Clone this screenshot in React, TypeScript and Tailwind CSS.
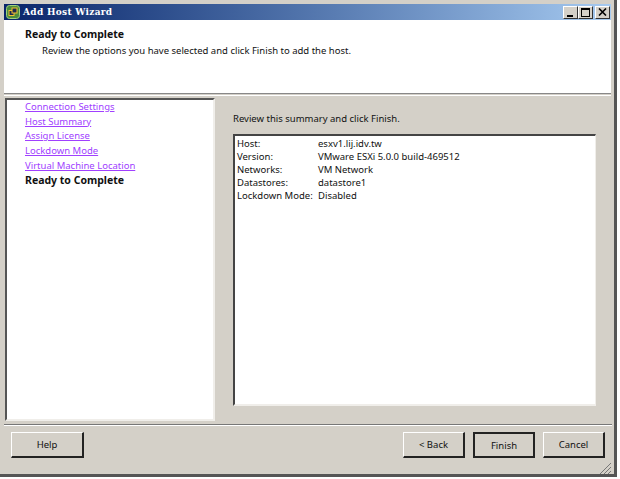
export default function App() {
  const links = ["Connection Settings", "Host Summary", "Assign License", "Lockdown Mode", "Virtual Machine Location"];
  const rows = [
    ["Host:", "esxv1.lij.idv.tw"],
    ["Version:", "VMware ESXi 5.0.0 build-469512"],
    ["Networks:", "VM Network"],
    ["Datastores:", "datastore1"],
    ["Lockdown Mode:", "Disabled"],
  ];
  const btn = "h-[26px] w-[62px] bg-[#d4d0c8] border border-t-white border-l-white border-r-[#222] border-b-[#222] border-r-2 border-b-2 text-[9.5px] text-[#111] flex items-center justify-center";
  return (
    <div className="w-[620px] h-[479px] bg-white overflow-hidden font-['Noto_Sans',sans-serif] text-[9.5px] leading-[15px] text-[#111]">
      <div className="w-[617px] h-[477px] bg-[#d4d0c8] border-r-[3px] border-b-[3px] border-r-[#555] border-b-[#555] pt-[4px] pl-[4px] pr-[3px] flex flex-col">
        <div className="h-[16px] shrink-0 flex items-center bg-gradient-to-r from-[#0a246a] to-[#a6caf0] pl-[2px] pr-[1px]">
          <svg width="14" height="14" viewBox="0 0 14 14" className="shrink-0">
            <rect x="0.5" y="0.5" width="13" height="13" rx="3" fill="#4c8c3c" stroke="#9fd07c" />
            <rect x="3" y="5.5" width="5" height="5" fill="#1d2b4d" stroke="#f0c030" />
            <rect x="6" y="3" width="5" height="5" fill="#1d2b4d" stroke="#f0c030" />
          </svg>
          <span className="ml-[3px] text-white font-bold text-[9px] tracking-[0.3px] font-['DejaVu_Serif',serif]">Add Host Wizard</span>
          <div className="ml-auto flex">
            <div className="w-[15px] h-[13px] bg-[#d4d0c8] border border-t-white border-l-white border-r-[#333] border-b-[#333] flex items-end pl-[3px] pb-[1px]">
              <div className="w-[6px] h-[2px] bg-black" />
            </div>
            <div className="w-[15px] h-[13px] bg-[#d4d0c8] border border-t-white border-l-white border-r-[#333] border-b-[#333] flex items-center justify-center">
              <div className="w-[9px] h-[9px] border border-t-2 border-black" />
            </div>
            <div className="ml-[2px] w-[15px] h-[13px] bg-[#d4d0c8] border border-t-white border-l-white border-r-[#333] border-b-[#333] flex items-center justify-center">
              <svg width="9" height="8" viewBox="0 0 9 8"><path d="M1 0.5L8 7.5M8 0.5L1 7.5" stroke="#000" strokeWidth="1.6" /></svg>
            </div>
          </div>
        </div>
        <div className="h-[73px] shrink-0 bg-white pt-[7px] pl-[21px]">
          <div className="font-bold text-[10.5px]">Ready to Complete</div>
          <div className="pl-[17px] mt-[1px]">Review the options you have selected and click Finish to add the host.</div>
        </div>
        <div className="h-[3px] shrink-0 border-t border-[#888] border-b border-b-white" />
        <div className="flex-1 min-h-0 flex flex-col">
          <div className="flex h-[325px] shrink-0 pt-[2px]">
            <div className="w-[210px] ml-[1px] bg-white border-t-2 border-l-2 border-t-[#555] border-l-[#555] border-r-2 border-b-2 border-r-[#f0eeea] border-b-[#f0eeea] pl-[18px] flex flex-col">
              {links.map((l) => (
                <a key={l} className="h-[14.7px] text-[#a040ff] underline leading-[14px] block">{l}</a>
              ))}
              <div className="font-bold text-[10.5px] h-[15px] leading-[15px]">Ready to Complete</div>
            </div>
            <div className="flex-1 pl-[18px] pt-[13px]">
              <div>Review this summary and click Finish.</div>
              <div className="mt-[8px] w-[363px] h-[272px] bg-white border-t-2 border-l-2 border-t-[#444] border-l-[#444] border-r border-b-2 border-r-[#f0eeea] border-b-[#f0eeea] pl-[2px] pt-[1px] leading-[13px]">
                {rows.map(([k, v]) => (
                  <div key={k} className="flex h-[13px]">
                    <div className="w-[81px] shrink-0 whitespace-nowrap">{k}</div>
                    <div>{v}</div>
                  </div>
                ))}
              </div>
            </div>
          </div>
          <div className="mt-[3px] mr-[-1px] h-[2px] shrink-0 border-t border-[#777] border-b border-b-white" />
          <div className="relative flex-1 flex items-start pt-[6px] pl-[7px] pr-[6px]">
            <button className={btn + " !w-[73px]"}>Help</button>
            <div className="ml-auto flex gap-[8px]">
              <button className={btn}>&lt; Back</button>
              <button className={btn + " !border-2 !border-t-[#222] !border-l-[#222]"}>Finish</button>
              <button className={btn}>Cancel</button>
            </div>
            <svg width="12" height="12" viewBox="0 0 12 12" className="absolute right-[0px] bottom-[0px]">
              <path d="M1 12L12 1M5 12L12 5M9 12L12 9" stroke="#777" strokeWidth="1" />
            </svg>
          </div>
        </div>
      </div>
    </div>
  );
}
